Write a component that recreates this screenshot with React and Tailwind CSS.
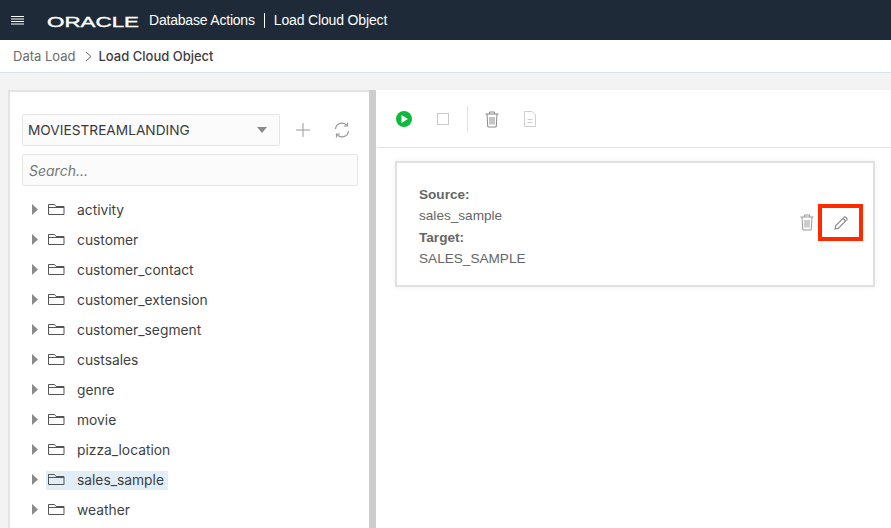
import React from "react";

const items = ["activity","customer","customer_contact","customer_extension","customer_segment","custsales","genre","movie","pizza_location","sales_sample","weather"];

function Folder() {
  return (
    <svg width="17" height="13" viewBox="0 0 17 13" fill="none" stroke="#555" strokeWidth="1" className="shrink-0">
      <path d="M0.5 11.5V1.5H6.5L8 3.5H16V11.5Z" />
      <path d="M0.5 4.5H16" />
    </svg>
  );
}

function Trash({ color, w = 14, h = 17 }) {
  return (
    <svg width={w} height={h} viewBox="0 0 14 17" fill="none" stroke={color} strokeWidth="1">
      <path d="M0.5 3H13.5M4.5 3V1H9.5V3" />
      <path d="M2 3L2.8 16H11.2L12 3" />
      <path d="M5 6V13.5M7 6V13.5M9 6V13.5" />
    </svg>
  );
}

export default function App() {
  const sans = { fontFamily: "Inter, sans-serif" };
  return (
    <div className="w-[891px] h-[528px] overflow-hidden flex flex-col bg-[#f3f3f3] font-['Liberation_Sans',sans-serif]">
      <header className="h-10 shrink-0 bg-[#1e2a38] flex items-center text-white">
        <svg width="14" height="11" viewBox="0 0 14 11" stroke="#fff" strokeWidth="1" className="ml-[11px]">
          <path d="M0 1.5H13M0 4H13M0 6.5H13M0 9H13" />
        </svg>
        <svg width="98" height="22" viewBox="0 0 98 22" className="ml-[22px] -mt-[1px]" fill="#fff" stroke="#fff" strokeWidth="0.4">
          <text x="0" y="18" fontFamily="'Liberation Sans', sans-serif" fontSize="15.5" fontWeight="400" textLength="92" lengthAdjust="spacingAndGlyphs">ORACLE</text>
        </svg>
        <span className="ml-[4px] text-[14px] leading-none tracking-[-0.2px]">Database Actions</span>
        <span className="ml-[9px] w-px h-[15px] bg-white"></span>
        <span className="ml-[9px] text-[14px] leading-none tracking-[-0.15px] -mt-[1px]">Load Cloud Object</span>
      </header>

      <nav className="h-[33px] shrink-0 bg-white border-b border-[#d9e0e6] flex items-center text-[13px] pl-[13px] pt-[1px]" style={sans}>
        <span className="text-[#6b6b6b]">Data Load</span>
        <svg width="7" height="11" viewBox="0 0 7 11" fill="none" stroke="#666" strokeWidth="1" className="ml-[9px] mr-[7px] -mt-[1px]">
          <path d="M1 1L6 5.5L1 10" />
        </svg>
        <span className="text-[#3d3d3d] font-medium">Load Cloud Object</span>
      </nav>

      <main className="flex flex-1 min-h-0 pt-[17px] pl-[8px]">
        <section className="w-[361px] shrink-0 bg-white border-l-2 border-t-2 border-[#e3e3e3] pl-[12px] pt-[22px]" style={sans}>
          <div className="flex items-center">
            <div className="w-[258px] h-[32px] bg-[#fbfbfb] border border-[#e5e5e5] rounded-[2px] flex items-center justify-between pl-[5px] pr-[12px] text-[13.7px] text-[#3a3a3a]">
              <span>MOVIESTREAMLANDING</span>
              <svg width="10" height="6" viewBox="0 0 10 6" fill="#8a8a8a"><path d="M0 0H10L5 6Z" /></svg>
            </div>
            <svg width="14" height="14" viewBox="0 0 14 14" stroke="#9a9a9a" strokeWidth="1" className="ml-[16px]">
              <path d="M7 0V14M0 7H14" />
            </svg>
            <svg width="16" height="16" viewBox="0 0 16 16" fill="none" stroke="#9a9a9a" strokeWidth="1.2" className="ml-[24px]">
              <path d="M1.5 7A6.5 6.5 0 0 1 13 3.5M14.5 9A6.5 6.5 0 0 1 3 12.5" />
              <path d="M13.5 0.5V4H10M2.5 15.5V12H6" />
            </svg>
          </div>
          <div className="mt-[8px] w-[336px] h-[32px] bg-[#fbfbfb] border border-[#e5e5e5] rounded-[2px] flex items-center pl-[6px] text-[14px] italic text-[#767676]">
            Search...
          </div>
          <ul className="mt-[9px]">
            {items.map((it) => (
              <li key={it} className="h-[30px] flex items-center text-[13.8px] text-[#3f3f3f]">
                <svg width="6" height="11" viewBox="0 0 6 11" fill="#8a8a8a" className="ml-[10px] shrink-0 -mt-[2px]"><path d="M0 0L6 5.5L0 11Z" /></svg>
                <div className={"ml-[8px] flex items-center h-[19px] pl-[2px] pr-[4px] " + (it === "sales_sample" ? "bg-[#e1eef7]" : "")}>
                  <span className="flex -mt-[2px]"><Folder /></span>
                  <span className="ml-[12px]">{it}</span>
                </div>
              </li>
            ))}
          </ul>
        </section>

        <div className="w-[8px] shrink-0 bg-white flex justify-start">
          <div className="w-[7px] h-full bg-[#cdcdcd]"></div>
        </div>

        <section className="flex-1 bg-white">
          <div className="h-[58px] border-b border-[#e3e3e3] flex items-center pl-[19px] pt-[1px]">
            <svg width="16" height="16" viewBox="0 0 16 16">
              <circle cx="8" cy="8" r="8" fill="#0dba3f" />
              <path d="M5.5 4L12 8L5.5 12Z" fill="#fff" />
            </svg>
            <span className="ml-[25px] w-[12px] h-[12px] border border-[#c9c9c9] block"></span>
            <span className="ml-[18px] w-px h-[26px] bg-[#e0e0e0] block"></span>
            <span className="ml-[17px] flex"><Trash color="#888" /></span>
            <svg width="12" height="16" viewBox="0 0 12 16" fill="none" stroke="#cfcfcf" strokeWidth="1" className="ml-[25px]">
              <path d="M0.5 0.5H8L11.5 4V15.5H0.5Z" />
              <path d="M3.5 8.5H8.5M3.5 11.5H8.5" />
            </svg>
          </div>
          <div className="ml-[18px] mt-[13px] w-[480px] h-[126px] bg-white border-2 border-[#e0e0e0] shadow-[0_0_6px_rgba(0,0,0,0.06)] flex items-center justify-between pl-[22px] pr-[10px] text-[13.6px] text-[#666] leading-[21.3px]">
            <div className="mt-[5px]">
              <div className="font-bold">Source:</div>
              <div>sales_sample</div>
              <div className="font-bold">Target:</div>
              <div>SALES_SAMPLE</div>
            </div>
            <div className="flex items-center -mt-[3px]">
              <Trash color="#999" />
              <div className="ml-[4px] w-[45px] h-[37px] border-[4px] border-[#ff2a00] flex items-center justify-center">
                <svg width="14" height="14" viewBox="0 0 14 14" fill="none" stroke="#888" strokeWidth="1.1">
                  <path d="M1 13L1.8 9.5L10 1.3Q11 0.5 12 1.3L12.7 2Q13.5 3 12.7 4L4.5 12.2Z" />
                  <path d="M9 2.5L11.5 5" />
                </svg>
              </div>
            </div>
          </div>
        </section>
      </main>
    </div>
  );
}
